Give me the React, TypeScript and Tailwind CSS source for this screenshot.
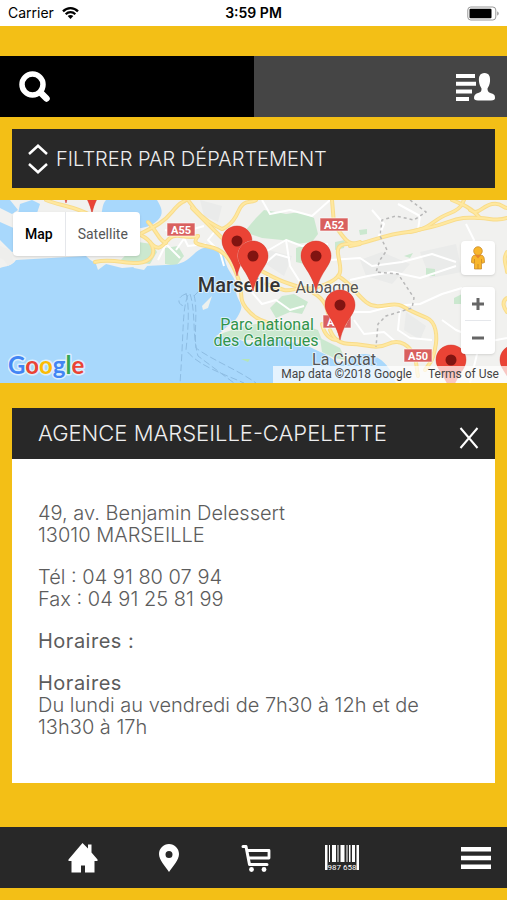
import type { ReactNode } from "react";

const pins = [
  { x: 66, y: -32 },
  { x: 92, y: -22 },
  { x: 237, y: 41 },
  { x: 253, y: 56 },
  { x: 316, y: 56 },
  { x: 340, y: 105 },
  { x: 451, y: 160 },
  { x: 515, y: 160 },
];

const majorRoads = [
  "M46 0C60 6 75 6 92 16S140 30 150 42S163 44 170 38S185 40 198 36",
  "M150 42C158 54 150 62 138 63S112 58 95 62",
  "M140 34C156 26 164 22 172 12S180 4 186 0",
  "M148 22C158 32 158 40 166 43",
  "M192 8L208 24L222 38L238 52",
  "M198 36C190 46 202 44 214 48S232 62 238 78S238 98 246 108S260 120 272 124",
  "M222 29S232 26 238 12S250 4 256 0",
  "M188 0C196 12 204 20 216 26L222 29",
  "M252 66C268 74 276 80 290 84S306 92 326 84S340 68 338 54S350 46 360 42",
  "M266 84L284 90C294 92 298 84 312 92S328 108 330 126",
  "M332 0L334 24C345 40 348 44 356 44S386 34 408 32S432 20 448 14S462 2 464 0",
  "M350 46L360 44",
  "M410 32C424 28 432 28 448 22S470 18 480 18S496 22 507 18",
  "M470 10C478 16 482 6 492 4S502 8 507 8",
  "M452 0C462 4 472 8 480 18",
  "M338 76C352 84 354 92 366 102S392 100 402 106S418 114 427 118S438 136 435 149S432 160 425 170",
  "M330 130C334 140 340 144 352 144S376 150 388 144S410 146 414 156S416 168 418 176",
  "M322 124C324 134 330 140 338 140",
  "M507 52C502 60 507 66 507 72M507 98C501 102 504 108 507 112",
];

const minorRoads = [
  "M230 32L246 50L262 54L286 40L302 46L328 44",
  "M216 30L208 40L220 52L224 66",
  "M250 90L262 104L276 100L290 110L304 106",
  "M286 40L290 66L300 82",
  "M262 66L276 54L290 58",
  "M262 0L270 14L290 10L312 16L330 0",
  "M330 60L360 58L372 66L402 62L432 54L456 62",
  "M372 10L384 24L378 38",
  "M350 80L368 76L392 72L420 78L456 66",
  "M345 112L370 112L392 106L420 104L442 94L462 88",
  "M398 4L420 16L418 30M466 24L474 40L468 54",
  "M354 120L364 134L384 132L398 144",
  "M400 110L398 130L410 138L432 140",
  "M465 130L478 150L470 183M442 120L456 130L486 142L507 138",
  "M165 30L182 34L188 46L206 44",
  "M176 50L190 30L204 26",
  "M158 60L166 44L180 58",
];

const pinPath =
  "M0-15C8.500-15 15-8.500 15 0C15 10 4 16 0 35C-4 16-15 10-15 0C-15-8.500-8.500-15 0-15Z";

function RoadSign({ x, y, label }: { x: number; y: number; label: string }) {
  return (
    <g>
      <rect x={x} y={y} width="28" height="13" fill="#d9605e" stroke="#fff" strokeOpacity=".6" />
      <text x={x + 14} y={y + 11} textAnchor="middle" fill="#fff" className="text-[11px] font-bold">
        {label}
      </text>
    </g>
  );
}

function MapDrawing() {
  return (
    <svg
      className="absolute inset-0 h-full w-full font-[Roboto,sans-serif]"
      viewBox="0 0 507 183"
      preserveAspectRatio="xMidYMid slice"
      role="img"
      aria-label="Carte des agences autour de Marseille"
    >
      <rect width="507" height="183" fill="#f1f1ef" />
      {/* hills */}
      <g fill="#eaebea">
        <path d="M200 0L222 6L218 22L204 16ZM268 50L292 56L284 76L266 64ZM360 60L382 52L410 64L392 84L366 76Z" />
        <path d="M420 52L456 44L462 72L430 78ZM406 112L426 126L420 140L404 130Z" />
      </g>
      <g fill="#cbe8cf">
        <path d="M244 32L256 18L264 10L276 12L286 14L300 12L314 18L318 34L312 42L296 44L282 40L262 38Z" />
        <path d="M138 42L152 44L157 52L150 64L120 61Z" />
        <path d="M165 48L178 46L184 56L176 66L165 64Z" />
        <path d="M296 48L308 44L304 64L296 62Z" />
        <path d="M270 108L282 96L294 94L308 102L302 114L290 112L276 118Z" />
        <path d="M220 134L244 126L256 124L306 126L318 130L322 140L300 140L274 138L248 140L220 138Z" />
        <path d="M320 138L340 148L346 160L334 158L322 152Z" />
        <path d="M335 42L345 40L344 48L335 50ZM359 30L367 29L367 34L360 35ZM426 68L435 69L435 76L426 76ZM454 98L462 94L461 104L454 104ZM404 56L413 53L410 58Z" />
        <path d="M48 20L62 12L68 20L56 30Z" />
      </g>
      {/* sea and lagoons */}
      <g fill="#a8d8fc">
        <path d="M0 68C6 66 12 66 16 60L86 56C92 62 98 66 106 64L122 68L146 66L166 65C180 66 188 60 194 54S204 47 215 47S222 60 230 72S234 82 236 92S244 104 240 112S236 120 228 126S220 134 216 136L238 139L250 144C260 140 270 138 280 140S304 144 312 148S326 154 334 160S348 158 354 156S368 152 378 158S392 172 396 183H0Z" />
        <path d="M100 26C102 12 102 4 106 0H157C162 8 164 14 158 20S144 28 140 28Z" />
        <path d="M0 0L10 0L18 10L12 14L0 8ZM20 4L32 0L40 4L36 16L50 30L40 34L26 22L18 14ZM0 22L18 30L22 48L12 52L0 40Z" />
      </g>
      <path d="M0 46L10 50L14 62L8 66L4 60L0 58Z" fill="#eeeeec" />
      <g fill="#eef1ee">
        <path d="M202 106L208 100L212 96L208 108L203 110Z" />
        <path d="M94 58L106 64L98 70ZM130 62L148 65L144 70L134 68Z" />
        <path d="M241 159L250 159L248 162Z" fill="#b5e5b8" />
      </g>
      {/* ferry lanes */}
      <g fill="none" stroke="#8dbce2" strokeDasharray="7 3">
        <path d="M188 95C182 110 184 130 180 183M186 93C190 108 188 130 186 150C198 166 224 174 244 183" />
        <path d="M194 95C198 110 194 130 196 148C212 160 238 170 256 183M190 94C196 112 192 136 198 156L234 183" />
        <path d="M186 94C178 96 176 104 184 106M194 96L202 88" />
      </g>
      <g fill="none" stroke="#fff" strokeLinejoin="round">
        {minorRoads.map((d) => (
          <path key={d} d={d} strokeWidth="2" />
        ))}
      </g>
      <g fill="none" strokeLinecap="round" strokeLinejoin="round">
        {majorRoads.map((d) => (
          <path key={d} d={d} stroke="#f8dc8c" strokeWidth="4" />
        ))}
        {majorRoads.map((d) => (
          <path key={d} d={d} stroke="#ffe89f" strokeWidth="2" />
        ))}
      </g>
      <path
        d="M410 0L426 12L414 20L396 16L382 20L380 36L387 50L380 60L376 72L398 74L414 98L412 108L386 116L378 124L376 147"
        fill="none"
        stroke="#b8b8b8"
        strokeWidth="1.500"
        strokeDasharray="3 3"
      />

      <RoadSign x={167} y={23} label="A55" />
      <RoadSign x={320} y={18} label="A52" />
      <RoadSign x={323} y={115} label="A50" />
      <RoadSign x={404} y={149} label="A50" />
      <g stroke="#fff" strokeWidth="2" strokeOpacity=".6" strokeLinejoin="round" paintOrder="stroke">
        <text x="239" y="92" textAnchor="middle" fill="#333" className="text-[20px] font-medium">
          Marseille
        </text>
        <text x="327" y="93" textAnchor="middle" fill="#555" className="text-[16px]">
          Aubagne
        </text>
        <text textAnchor="middle" fill="#31944c" className="text-[16px]">
          <tspan x="267" y="130">Parc national</tspan>
          <tspan x="266" y="146">des Calanques</tspan>
        </text>
        <text x="344" y="165" textAnchor="middle" fill="#555" className="text-[16px]">
          La Ciotat
        </text>
      </g>

      {pins.map((p) => (
        <g key={p.x} transform={`translate(${p.x} ${p.y})`}>
          <path d={pinPath} fill="#ea4335" stroke="#fff" strokeOpacity=".7" />
          <path d={pinPath} fill="#ea4335" stroke="#cf3a2f" strokeWidth=".5" />
          <circle r="5.500" fill="#811411" />
        </g>
      ))}
    </svg>
  );
}

function StatusBar() {
  return (
    <div className="grid h-[26px] grid-cols-3 items-center bg-white px-2 font-[Inter,sans-serif] text-sm text-black">
      <div className="flex items-center gap-2">
        <span>Carrier</span>
        <svg className="h-3 w-[17px]" viewBox="0 0 17 12" fill="none" stroke="#000" strokeWidth="2.300">
          <path d="M1 4.400C5.200.1 11.800.1 16 4.400M3.700 7.200C6.400 4.500 10.600 4.500 13.300 7.200" />
          <path d="M5.700 9C7.300 7.500 9.700 7.500 11.300 9L8.500 12Z" fill="#000" stroke="none" />
        </svg>
      </div>
      <span className="text-center font-semibold">3:59 PM</span>
      <svg className="h-[15px] w-8 justify-self-end" viewBox="0 0 32 15">
        <rect x=".8" y="1" width="28" height="13" rx="3" fill="#fff" stroke="#999" />
        <rect x="2.500" y="2.800" width="22" height="9.500" rx="1" />
        <path d="M30.200 5.500v4c2-.7 2-3.300 0-4Z" fill="#999" />
      </svg>
    </div>
  );
}

function TopBar() {
  return (
    <header className="mt-[30px] grid h-[61px] grid-cols-2">
      <form className="flex items-center bg-black pl-[18px]">
        <button type="button" aria-label="Rechercher">
          <svg className="h-8 w-8" viewBox="0 0 32 32" fill="none" stroke="#fff">
            <circle cx="14.500" cy="13.500" r="10.500" strokeWidth="5.500" />
            <path d="M22.500 21.500L28.500 27.500" strokeWidth="6.500" strokeLinecap="round" />
          </svg>
        </button>
        <input
          type="search"
          aria-label="Recherche"
          className="ml-3 min-w-0 flex-1 bg-transparent text-white outline-none"
        />
      </form>
      <div className="flex items-center justify-end bg-[#454545] pr-3">
        <button type="button" aria-label="Mon compte">
          <svg className="h-7 w-10" viewBox="0 0 40 28" fill="#fff">
            <path d="M1 1h19v4H1zM1 8.700h20v4H1zM1 16.500h16v4H1zM1 24h13v4H1z" />
            <path d="M29.500 0C34 0 35.500 3.500 35 8.500C34.800 11.500 33.500 13.500 32.500 15.500C32.500 19 34 19.500 37 20.500C40 21.500 40 23.500 40 25C40 26.500 39 27.500 36 27.500H23C20 27.500 19 26.500 19 25C19 22.500 20 21 23 20C26 19 26.500 18.500 26.500 15.500C25.500 13.500 24.200 11.500 24 8.500C23.500 3.500 25 0 29.500 0Z" />
          </svg>
        </button>
      </div>
    </header>
  );
}

function GoogleMap() {
  return (
    <section className="relative mt-3 h-[183px] overflow-hidden bg-[#a8d8fc] font-[Roboto,sans-serif]">
      <MapDrawing />
      <div className="absolute left-[13px] top-3 flex h-11 rounded-sm bg-white text-sm shadow">
        <button type="button" className="border-r border-gray-200 px-3 font-medium text-black">
          Map
        </button>
        <button type="button" className="px-3 text-[#565656]">
          Satellite
        </button>
      </div>
      <button
        type="button"
        aria-label="Street View"
        className="absolute right-3 top-[41px] grid h-[34px] w-[34px] place-items-center rounded-sm bg-white shadow"
      >
        <svg className="h-6 w-4" viewBox="0 0 16 24" fill="#f8b62c" stroke="#c38324" strokeWidth=".7">
          <path d="M5 9C2 9.500 1.500 12 1.500 16.500L4.500 17.500V23H11.500V17.500L14.500 16.500C14.500 12 14 9.500 11 9Z" />
          <circle cx="8" cy="5" r="4.300" />
          <path d="M5 9L8 12.500L11 9Z" fill="#e7852b" stroke="none" />
          <path d="M4.500 17V13M11.500 17V13M8 18V23" />
        </svg>
      </button>
      <div className="absolute right-3 top-[87px] flex w-[34px] flex-col rounded-sm bg-white shadow">
        <button type="button" aria-label="Zoom in" className="grid h-[33px] place-items-center">
          <svg className="h-3 w-3" viewBox="0 0 12 12" fill="#666">
            <path d="M4.500 0h3v4.500H12v3H7.500V12h-3V7.500H0v-3h4.500z" />
          </svg>
        </button>
        <span className="mx-1 h-px bg-gray-200" />
        <button type="button" aria-label="Zoom out" className="grid h-[33px] place-items-center">
          <svg className="h-3 w-3" viewBox="0 0 12 12" fill="#666">
            <path d="M0 4.500h12v3H0z" />
          </svg>
        </button>
      </div>
      <a href="#google" aria-label="Google" className="absolute bottom-0 left-2">
        <svg className="h-8 w-20" viewBox="0 0 80 32">
          <text
            x="0"
            y="23"
            stroke="#fff"
            strokeWidth="3"
            strokeOpacity=".6"
            paintOrder="stroke"
            strokeLinejoin="round"
            className="font-[Lato,sans-serif] text-2xl font-bold"
          >
            <tspan fill="#4285f4">G</tspan>
            <tspan fill="#ea4335">o</tspan>
            <tspan fill="#fbbc05">o</tspan>
            <tspan fill="#4285f4">g</tspan>
            <tspan fill="#34a853">l</tspan>
            <tspan fill="#ea4335">e</tspan>
          </text>
        </svg>
      </a>
      <div className="absolute bottom-0 right-0 flex gap-4 bg-white/70 pl-2 pr-2 text-xs leading-[17px] text-[#444]">
        <span>Map data ©2018 Google</span>
        <a href="#terms">Terms of Use</a>
      </div>
    </section>
  );
}

function AgencyCard() {
  return (
    <article className="mx-3 mt-[25px] bg-white">
      <div className="flex h-[51px] items-center justify-between bg-[#282828] pl-[26px] pr-4 text-[#eee]">
        <h1 className="text-[22px] font-light">AGENCE MARSEILLE-CAPELETTE</h1>
        <button type="button" aria-label="Fermer" className="pt-2">
          <svg className="h-[22px] w-5" viewBox="0 0 20 22" fill="none" stroke="#fff" strokeWidth="2">
            <path d="M1.500 1L18.500 21M18.500 1L1.500 21" />
          </svg>
        </button>
      </div>
      <div className="space-y-5 px-[26px] pb-[45px] pt-[43px] text-xl font-light leading-[22px] text-[#5c5c5c]">
        <p>
          49, av. Benjamin Delessert
          <br />
          13010 MARSEILLE
        </p>
        <p>
          Tél : 04 91 80 07 94
          <br />
          Fax : 04 91 25 81 99
        </p>
        <h2 className="font-normal leading-[22px] tracking-wide">Horaires :</h2>
        <div>
          <h3 className="font-normal tracking-wide">Horaires</h3>
          <p>Du lundi au vendredi de 7h30 à 12h et de 13h30 à 17h</p>
        </div>
      </div>
    </article>
  );
}

function NavLink({ label, children }: { label: string; children: ReactNode }) {
  return (
    <a href="#nav" aria-label={label} className="grid flex-1 place-items-center">
      {children}
    </a>
  );
}

function BottomNav() {
  return (
    <nav className="mb-3 mt-11 flex h-[61px] items-center bg-[#282828] pl-10 pr-4">
      <div className="flex flex-1">
        <NavLink label="Accueil">
          <svg className="h-[30px] w-[30px]" viewBox="0 0 30 30" fill="#fff">
            <path d="M14.500 0L20 5.500V1.500H23.500V9.500L29.500 16.500V18H26.500V29.500H17V22.500H13V29.500H3.500V18H.5V16.500Z" />
          </svg>
        </NavLink>
        <NavLink label="Agences">
          <svg className="h-7 w-5" viewBox="0 0 20 28">
            <path
              d="M10 0C15.500 0 20 4.500 20 10C20 16 14 22 10 28C6 22 0 16 0 10C0 4.500 4.500 0 10 0ZM10 7A3.500 3.500 0 1 0 10 14A3.500 3.500 0 1 0 10 7Z"
              fill="#fff"
              fillRule="evenodd"
            />
          </svg>
        </NavLink>
        <NavLink label="Panier">
          <svg className="h-7 w-[30px]" viewBox="0 0 30 28" fill="none" stroke="#fff">
            <path d="M2 2.500H5L8.500 20.500H26" strokeWidth="3" strokeLinecap="round" strokeLinejoin="round" />
            <path d="M6 6.500H28V14H8" strokeWidth="2.800" strokeLinejoin="round" />
            <circle cx="10.500" cy="25.500" r="2.400" fill="#fff" stroke="none" />
            <circle cx="23" cy="25.500" r="2.400" fill="#fff" stroke="none" />
          </svg>
        </NavLink>
        <NavLink label="Scanner">
          <svg className="h-[26px] w-[34px]" viewBox="0 0 34 26" fill="#fff">
            <path d="M0 0h2.500v25H0zM31.500 0h2.500v25h-2.500zM4 0h1v17H4zM7 0h4v17H7zM12.500 0h1v17h-1zM15.500 0h4v17h-4zM21.500 0h1v17h-1zM24 0h1.500v17h-1.500zM27 0h3v17h-3z" />
            <text x="17" y="25" textAnchor="middle" className="font-[Roboto,sans-serif] text-[8px]">
              987 658
            </text>
          </svg>
        </NavLink>
      </div>
      <button type="button" aria-label="Menu" className="ml-[76px]">
        <svg className="h-[22px] w-[30px]" viewBox="0 0 30 22" fill="#fff">
          <path d="M0 0h30v4.500H0zM0 8.700h30v4.500H0zM0 17.400h30v4.500H0z" />
        </svg>
      </button>
    </nav>
  );
}

export default function App() {
  return (
    <div className="min-h-screen bg-[#f3bf16] font-[Inter,sans-serif]">
      <StatusBar />
      <TopBar />
      <main>
        <div className="mx-3 mt-3">
          <button
            type="button"
            className="flex h-[59px] w-full items-center gap-2 bg-[#282828] pl-4 text-xl font-light text-[#eee]"
          >
            <svg className="h-[30px] w-5" viewBox="0 0 20 30" fill="none" stroke="#fff" strokeWidth="2.500">
              <path d="M1 10L10 1.800L19 10M1 20L10 28.200L19 20" />
            </svg>
            FILTRER PAR DÉPARTEMENT
          </button>
        </div>
        <GoogleMap />
        <AgencyCard />
      </main>
      <BottomNav />
    </div>
  );
}
